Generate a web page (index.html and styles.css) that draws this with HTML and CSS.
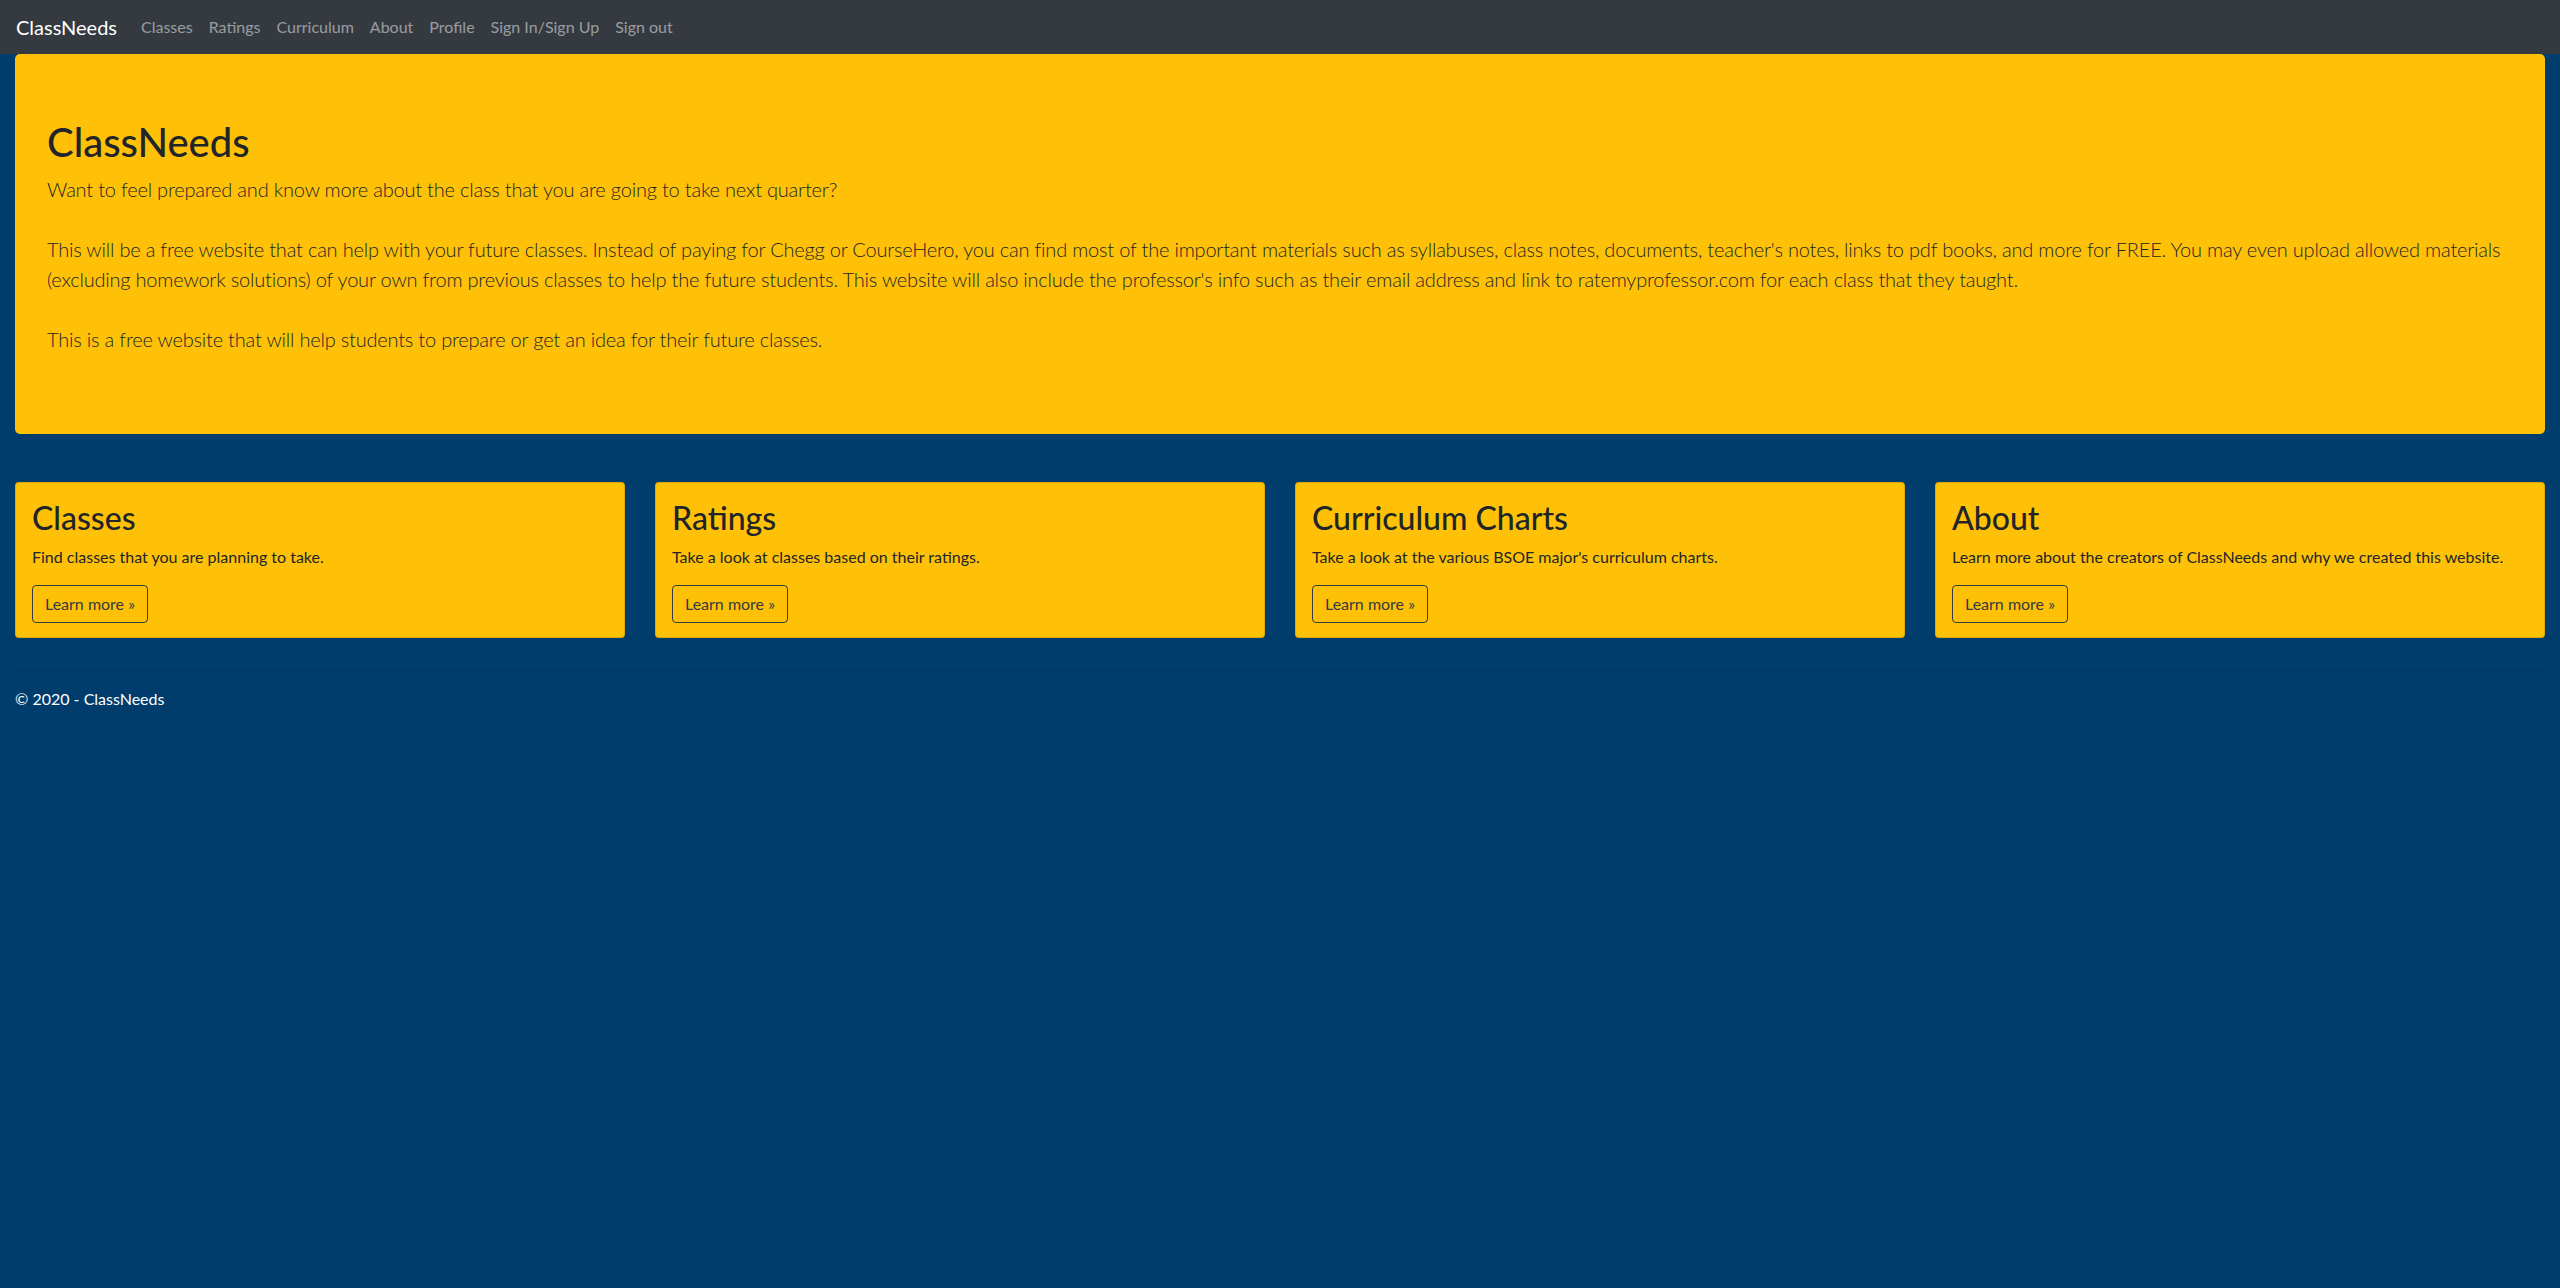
FILE: index.html
```html
<!DOCTYPE html>
<html lang="en">
<head>
  <meta charset="UTF-8">
  <meta name="viewport" content="width=device-width, initial-scale=1.0">
  <title>Home Page - ClassNeeds</title>
  <link rel="stylesheet" href="styles.css">
</head>
<body>
  <nav class="navbar">
    <a href="#" class="navbar-brand">ClassNeeds</a>
    <ul class="nav-links">
      <li><a href="#">Classes</a></li>
      <li><a href="#">Ratings</a></li>
      <li><a href="#">Curriculum</a></li>
      <li><a href="#">About</a></li>
      <li><a href="#">Profile</a></li>
      <li><a href="#">Sign In/Sign Up</a></li>
      <li><a href="#">Sign out</a></li>
    </ul>
  </nav>

<div class="container">
  <div class="jumbotron">
    <h1>ClassNeeds</h1>
    <p class="lead">Want to feel prepared and know more about the class that you are going to take next quarter?<br/><br/>
      This will be a free website that can help with your future classes. Instead of paying for Chegg or CourseHero, you can find most of the important materials such as syllabuses, class notes, documents, teacher's notes, links to pdf books, and more for FREE. You may even upload allowed materials (excluding homework solutions) of your own from previous classes to help the future students. This website will also include the professor's info such as their email address and link to ratemyprofessor.com for each class that they taught.<br/><br/>
      This is a free website that will help students to prepare or get an idea for their future classes.
    </p>
  </div>

  <div class="row">
    <div class="card">
      <h2>Classes</h2>
      <p>Find classes that you are planning to take.</p>
      <a href="#" class="btn">Learn more &raquo;</a>
    </div>
    <div class="card">
      <h2>Ratings</h2>
      <p>Take a look at classes based on their ratings.</p>
      <a href="#" class="btn">Learn more &raquo;</a>
    </div>
    <div class="card">
      <h2>Curriculum Charts</h2>
      <p>Take a look at the various BSOE major's curriculum charts.</p>
      <a href="#" class="btn">Learn more &raquo;</a>
    </div>
    <div class="card">
      <h2>About</h2>
      <p>Learn more about the creators of ClassNeeds and why we created this website.</p>
      <a href="#" class="btn">Learn more &raquo;</a>
    </div>
  </div>

  <hr/>
  <footer>
    <p>&copy; 2020 - ClassNeeds</p>
  </footer>
</div>
</body>
</html>
```

FILE: styles.css
```css
body {
  margin: 0;
  background-color: #003c6c;
  color: #212529;
  font-family: Lato, "Open Sans", sans-serif;
  font-size: 16px;
  line-height: 1.5;
}

a {
  text-decoration: none;
}

/* top bar */
.navbar {
  display: flex;
  align-items: center;
  background-color: #343a40;
  padding: 7px 16px;
}

.navbar-brand {
  color: #fff;
  font-size: 20px;
  line-height: 30px;
  padding: 5px 0;
  margin-right: 16px;
}

.nav-links {
  display: flex;
  list-style: none;
  margin: 0;
  padding: 0;
}

.nav-links a {
  display: block;
  padding: 8px;
  color: rgba(255, 255, 255, 0.5);
}

.nav-links a:hover {
  color: rgba(255, 255, 255, 0.75);
}

.container {
  padding: 0 15px;
}

/* big yellow box */
.jumbotron {
  background-color: #ffc107;
  border-radius: 5px;
  padding: 64px 32px;
  margin-bottom: 32px;
}

.jumbotron h1 {
  font-size: 40px;
  font-weight: 500;
  line-height: 1.2;
  margin: 0 0 8px;
}

.lead {
  font-size: 20px;
  font-weight: 300;
  letter-spacing: -0.2px;
  margin: 0 0 16px;
}

.row {
  display: grid;
  grid-template-columns: repeat(4, 1fr);
  gap: 30px;
  margin: 48px 0 32px;
}

.card {
  background-color: #ffc107;
  border: 1px solid rgba(0, 0, 0, 0.125);
  border-radius: 4px;
  padding: 16px 16px 14px;
}

.card h2 {
  font-size: 32px;
  font-weight: 500;
  line-height: 1.2;
  margin: 0 0 8px;
}

.card p {
  margin: 0 0 16px;
}

.btn {
  display: inline-block;
  color: #343a40;
  border: 1px solid #343a40;
  border-radius: 4px;
  padding: 6px 12px;
}

.btn:hover {
  background-color: #343a40;
  color: #fff;
}

hr {
  border: 0;
  border-top: 1px solid rgba(0, 0, 0, 0.1);
  margin: 16px 0;
}

footer p {
  color: #fff;
  margin: 0 0 16px;
}
```
